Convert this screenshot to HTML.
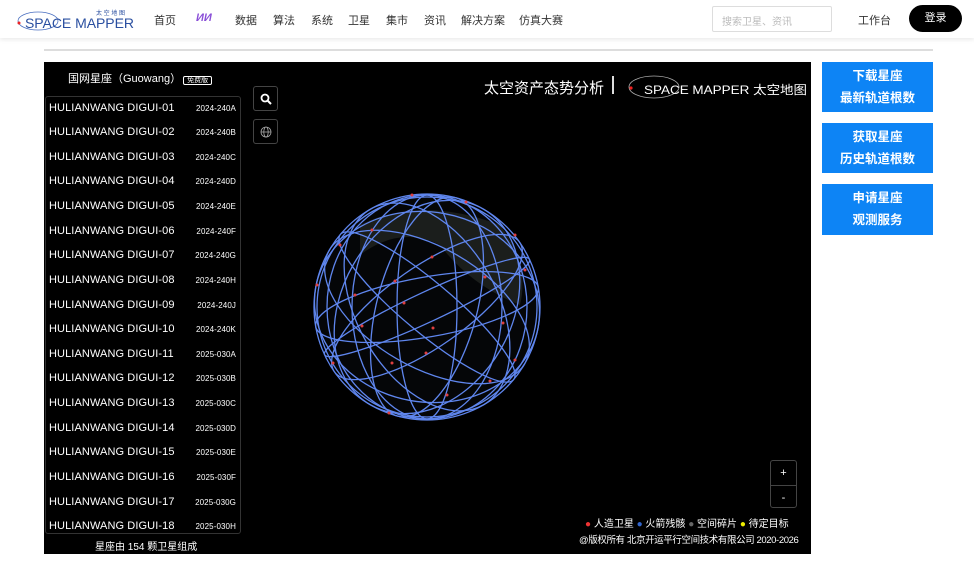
<!DOCTYPE html>
<html><head><meta charset="utf-8"><style>
*{margin:0;padding:0;box-sizing:border-box}
body{width:974px;height:561px;background:#fff;font-family:"Liberation Sans","Noto Sans CJK SC",sans-serif;position:relative;overflow:hidden}
.hdr{position:absolute;left:0;top:0;width:974px;height:38px;background:#fff;box-shadow:0 2px 4px rgba(0,0,0,.08)}
.nav{position:absolute;top:12px;font-size:11px;color:#333}
.abs{position:absolute}
.panel{position:absolute;left:44px;top:62px;width:767px;height:492px;background:#000}
.list{position:absolute;left:45px;top:96px;width:196px;height:438px;border:1px solid #333;border-radius:3px;overflow:hidden}
.row{position:absolute;left:3px;width:190px;color:#fff;font-size:11px;letter-spacing:.1px}
.row span{position:absolute;right:3px;top:2px;font-size:8px}
.btn{position:absolute;left:822px;width:111px;background:#0d84f5;color:#fff;font-size:12.5px;font-weight:bold;text-align:center;line-height:22px;padding-top:3px}
.ib{position:absolute;left:253px;width:25px;height:25px;border:1px solid #444;border-radius:3px}
</style></head><body>
<div class="hdr">
 <svg class="abs" style="left:16px;top:7px" width="125" height="26"><ellipse cx="22" cy="14" rx="20" ry="9" fill="none" stroke="#4a6fc0" stroke-width="0.8"/><circle cx="3" cy="16" r="1.5" fill="#e22"/><text x="9" y="21" font-size="14" fill="#2a4fa0" font-family="Liberation Sans" textLength="109">SPACE MAPPER</text><text x="80" y="8" font-size="6" fill="#2a4fa0">太 空 地 图</text></svg>
 <div class="nav" style="left:154px">首页</div>
 <div class="nav" style="left:196px;color:#8a4fd8;font-weight:bold;font-style:italic">ИИ</div>
 <div class="nav" style="left:235px">数据</div>
 <div class="nav" style="left:273px">算法</div>
 <div class="nav" style="left:311px">系统</div>
 <div class="nav" style="left:348px">卫星</div>
 <div class="nav" style="left:386px">集市</div>
 <div class="nav" style="left:424px">资讯</div>
 <div class="nav" style="left:461px">解决方案</div>
 <div class="nav" style="left:519px">仿真大赛</div>
 <div class="abs" style="left:712px;top:6px;width:120px;height:26px;border:1px solid #ddd;border-radius:2px;font-size:10px;color:#bbb;padding:6px 9px">搜索卫星、资讯</div>
 <div class="nav" style="left:858px">工作台</div>
 <div class="abs" style="left:909px;top:5px;width:53px;height:27px;background:#000;border-radius:14px;color:#fff;font-size:11px;text-align:center;line-height:27px">登录</div>
</div>
<div class="abs" style="left:44px;top:49px;width:889px;height:2px;background:#ddd"></div>
<div class="panel"></div>
<div class="abs" style="left:68px;top:70px;color:#fff;font-size:11px">国网星座（Guowang）<span style="font-size:7px;border:1px solid #fff;border-radius:2px;padding:0 3px;margin-left:2px">免费版</span></div>
<div class="list">
<div class="row" style="top:5px">HULIANWANG DIGUI-01<span>2024-240A</span></div>
<div class="row" style="top:29px">HULIANWANG DIGUI-02<span>2024-240B</span></div>
<div class="row" style="top:54px">HULIANWANG DIGUI-03<span>2024-240C</span></div>
<div class="row" style="top:78px">HULIANWANG DIGUI-04<span>2024-240D</span></div>
<div class="row" style="top:103px">HULIANWANG DIGUI-05<span>2024-240E</span></div>
<div class="row" style="top:128px">HULIANWANG DIGUI-06<span>2024-240F</span></div>
<div class="row" style="top:152px">HULIANWANG DIGUI-07<span>2024-240G</span></div>
<div class="row" style="top:177px">HULIANWANG DIGUI-08<span>2024-240H</span></div>
<div class="row" style="top:202px">HULIANWANG DIGUI-09<span>2024-240J</span></div>
<div class="row" style="top:226px">HULIANWANG DIGUI-10<span>2024-240K</span></div>
<div class="row" style="top:251px">HULIANWANG DIGUI-11<span>2025-030A</span></div>
<div class="row" style="top:275px">HULIANWANG DIGUI-12<span>2025-030B</span></div>
<div class="row" style="top:300px">HULIANWANG DIGUI-13<span>2025-030C</span></div>
<div class="row" style="top:325px">HULIANWANG DIGUI-14<span>2025-030D</span></div>
<div class="row" style="top:349px">HULIANWANG DIGUI-15<span>2025-030E</span></div>
<div class="row" style="top:374px">HULIANWANG DIGUI-16<span>2025-030F</span></div>
<div class="row" style="top:399px">HULIANWANG DIGUI-17<span>2025-030G</span></div>
<div class="row" style="top:423px">HULIANWANG DIGUI-18<span>2025-030H</span></div>
</div>
<div class="abs" style="left:95px;top:538px;color:#fff;font-size:10px">星座由 154 颗卫星组成</div>
<div class="ib" style="top:86px"><svg width="25" height="25"><circle cx="11" cy="11" r="3.5" fill="none" stroke="#fff" stroke-width="1.8"/><line x1="13.5" y1="13.5" x2="17" y2="17" stroke="#fff" stroke-width="2"/></svg></div>
<div class="ib" style="top:119px"><svg width="25" height="25"><g fill="none" stroke="#aaa" stroke-width="0.8"><circle cx="12" cy="12" r="5"/><ellipse cx="12" cy="12" rx="2.2" ry="5"/><line x1="7" y1="12" x2="17" y2="12"/></g></svg></div>
<div class="abs" style="left:484px;top:77px;color:#fff;font-size:15px">太空资产态势分析</div>
<div class="abs" style="left:612px;top:76px;width:2px;height:18px;background:#ddd"></div>
<svg class="abs" style="left:626px;top:70px" width="185" height="32"><ellipse cx="28" cy="17" rx="25" ry="11" fill="none" stroke="#aaa" stroke-width="0.8"/><circle cx="5" cy="18" r="1.6" fill="#e22"/><text x="18" y="24" font-size="12" fill="#fff" textLength="163" lengthAdjust="spacingAndGlyphs">SPACE MAPPER 太空地图</text></svg>
<svg class="abs" style="left:300px;top:185px" width="260" height="245">
 <circle cx="127" cy="122" r="110" fill="#050608"/>
 <path d="M60 40 Q120 10 200 40 Q230 80 220 120 Q170 100 140 60 Q100 40 60 70Z" fill="#2a2e2a" opacity=".6"/>
 <g fill="none" stroke="#5f86ee" stroke-width="1.3">
  <circle cx="127" cy="122" r="113"/>
  <circle cx="127" cy="122" r="110"/>
  <ellipse cx="127" cy="122" rx="30" ry="112"/>
  <ellipse cx="127" cy="122" rx="75" ry="112"/>
  <ellipse cx="127" cy="122" rx="100" ry="112"/>
  <ellipse cx="127" cy="122" rx="113" ry="40" transform="rotate(-35 127 122)"/>
  <ellipse cx="127" cy="122" rx="113" ry="60" transform="rotate(30 127 122)"/>
  <ellipse cx="127" cy="122" rx="113" ry="25" transform="rotate(40 127 122)"/>
  <ellipse cx="127" cy="122" rx="113" ry="30" transform="rotate(-10 127 122)"/>
  <ellipse cx="127" cy="122" rx="113" ry="85" transform="rotate(-60 127 122)"/>
  <ellipse cx="127" cy="122" rx="113" ry="70" transform="rotate(60 127 122)"/>
  <ellipse cx="127" cy="122" rx="113" ry="95" transform="rotate(10 127 122)"/>
  <ellipse cx="127" cy="122" rx="113" ry="50" transform="rotate(-75 127 122)"/>
  <ellipse cx="127" cy="122" rx="113" ry="15" transform="rotate(-25 127 122)"/>
 </g>
 <g fill="#e04040">
  <circle cx="112" cy="10" r="1.5"/><circle cx="40" cy="60" r="1.5"/><circle cx="132" cy="72" r="1.5"/><circle cx="95" cy="96" r="1.5"/><circle cx="104" cy="118" r="1.5"/><circle cx="133" cy="143" r="1.5"/><circle cx="92" cy="178" r="1.5"/><circle cx="126" cy="168" r="1.5"/><circle cx="203" cy="138" r="1.5"/><circle cx="185" cy="92" r="1.5"/><circle cx="55" cy="110" r="1.5"/><circle cx="33" cy="178" r="1.5"/><circle cx="215" cy="175" r="1.5"/><circle cx="147" cy="210" r="1.5"/><circle cx="72" cy="45" r="1.5"/><circle cx="166" cy="17" r="1.5"/><circle cx="17" cy="100" r="1.5"/><circle cx="225" cy="85" r="1.5"/><circle cx="89" cy="228" r="1.5"/><circle cx="190" cy="196" r="1.5"/><circle cx="62" cy="141" r="1.5"/><circle cx="215" cy="50" r="1.5"/>
 </g>
</svg>
<div class="abs" style="left:770px;top:460px;width:27px;height:48px;border:1px solid #444;border-radius:3px;color:#fff;font-size:11px;text-align:center;line-height:24px">+<div style="border-top:1px solid #444">-</div></div>
<div class="abs" style="left:585px;top:515px;color:#fff;font-size:10px;white-space:nowrap"><span style="color:#e33">●</span> 人造卫星 <span style="color:#36c">●</span> 火箭残骸 <span style="color:#666">●</span> 空间碎片 <span style="color:#ee0">●</span> 待定目标</div>
<div class="abs" style="left:579px;top:532px;color:#fff;font-size:9.5px;letter-spacing:-0.4px;white-space:nowrap">@版权所有 北京开运平行空间技术有限公司 2020-2026</div>
<div class="btn" style="top:62px;height:50px">下载星座<br>最新轨道根数</div>
<div class="btn" style="top:123px;height:50px">获取星座<br>历史轨道根数</div>
<div class="btn" style="top:184px;height:51px">申请星座<br>观测服务</div>
</body></html>
